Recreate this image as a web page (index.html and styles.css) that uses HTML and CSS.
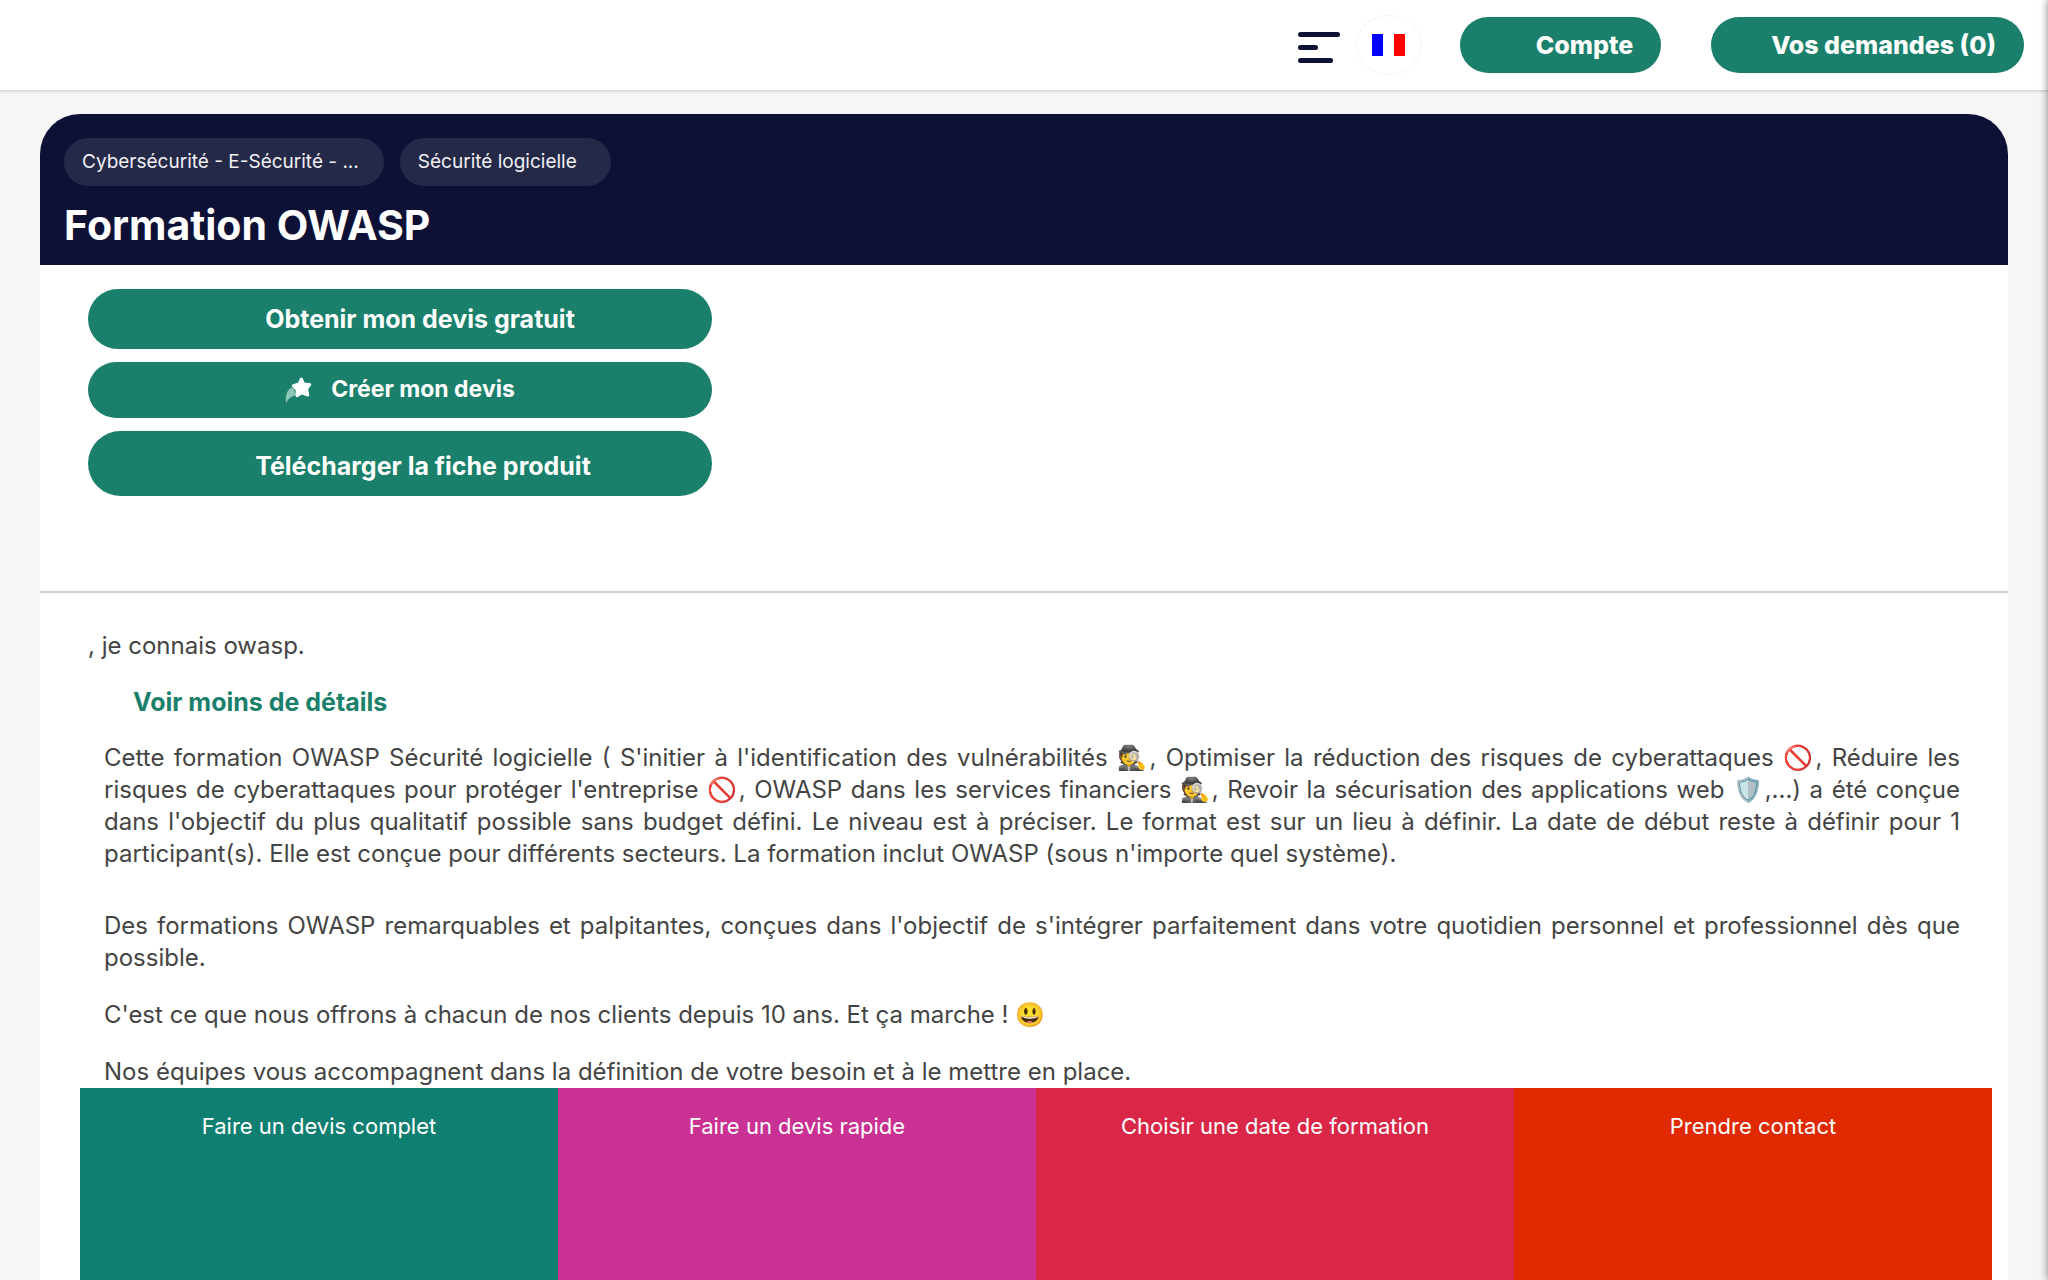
FILE: index.html
```
<!DOCTYPE html>
<html lang="fr">

<head>
    <meta charset="UTF-8">
    <meta name="viewport" content="width=device-width, initial-scale=1.0">
    <title>Formation OWASP</title>
    <link rel="stylesheet" href="styles.css">
</head>

<body>
    <header class="topbar">
        <div class="tools">
            <button class="menu-btn" aria-label="Menu">
                <span class="bar"></span>
                <span class="bar bar-short"></span>
                <span class="bar bar-medium"></span>
            </button>
            <button class="lang-btn" aria-label="Français">
                <svg width="33" height="22" viewBox="0 0 33 22">
                    <rect width="11" height="22" fill="#0000ff" />
                    <rect x="11" width="11" height="22" fill="#ffffff" />
                    <rect x="22" width="11" height="22" fill="#ff0000" />
                </svg>
            </button>
        </div>
        <button class="btn btn-top">Compte</button>
        <button class="btn btn-top">Vos demandes (0)</button>
    </header>

    <main class="card">
        <div class="card-header">
            <nav class="chips">
                <a class="chip" href="#">Cybersécurité - E-Sécurité - ...</a>
                <a class="chip" href="#">Sécurité logicielle</a>
            </nav>
            <h1>Formation OWASP</h1>
        </div>

        <div class="actions">
            <button class="btn btn-quote">Obtenir mon devis gratuit</button>
            <button class="btn btn-create">
                <svg width="28" height="28" viewBox="0 0 28 28">
                    <path d="M7 12 C2 15 0 20 1 28 C4 23 7 21 11 20 Q9.4 18 9.8 15.6 Z" fill="#8cc5b6" />
                    <path d="M16.4 4 L18.6 9 L24.8 9.4 L21.6 13.8 L22.8 20 L17 17.8 L12 20.6 L12.2 14.6 L8.4 10.6 L14 9 Z" fill="#ffffff" stroke="#ffffff" stroke-width="3" stroke-linejoin="round" />
                </svg>
                Créer mon devis
            </button>
            <button class="btn btn-download">Télécharger la fiche produit</button>
        </div>

        <div class="details">
            <p class="intro">, je connais owasp.</p>
            <button class="toggle-details">Voir moins de détails</button>
            <div class="description">
                <p class="summary">Cette formation OWASP Sécurité logicielle ( S'initier à l'identification des vulnérabilités 🕵️, Optimiser la réduction des risques de cyberattaques 🚫, Réduire les risques de cyberattaques pour protéger l'entreprise 🚫, OWASP dans les services financiers 🕵️, Revoir la sécurisation des applications web 🛡️,...) a été conçue dans l'objectif du plus qualitatif possible sans budget défini. Le niveau est à préciser. Le format est sur un lieu à définir. La date de début reste à définir pour 1 participant(s). Elle est conçue pour différents secteurs. La formation inclut OWASP (sous n'importe quel système).</p>
                <p>Des formations OWASP remarquables et palpitantes, conçues dans l'objectif de s'intégrer parfaitement dans votre quotidien personnel et professionnel dès que possible.</p>
                <p>C'est ce que nous offrons à chacun de nos clients depuis 10 ans. Et ça marche ! 😃</p>
                <p>Nos équipes vous accompagnent dans la définition de votre besoin et à le mettre en place.</p>
            </div>
        </div>

        <nav class="tiles">
            <a class="tile tile-full" href="#">Faire un devis complet</a>
            <a class="tile tile-quick" href="#">Faire un devis rapide</a>
            <a class="tile tile-date" href="#">Choisir une date de formation</a>
            <a class="tile tile-contact" href="#">Prendre contact</a>
        </nav>
    </main>

    <aside class="side-panel"></aside>
</body>

</html>
```
FILE: styles.css
```
* {
    box-sizing: border-box;
}

body {
    display: flex;
    flex-direction: column;
    min-height: 100vh;
    margin: 0;
    background-color: #f6f6f6;
    color: #444444;
    font-family: Inter, "Noto Color Emoji", sans-serif;
    font-size: 24px;
    line-height: 32px;
}

h1,
p {
    margin: 0;
}

button {
    border: none;
    font: inherit;
    cursor: pointer;
}

a {
    color: inherit;
    text-decoration: none;
}

/* Top bar */
.topbar {
    display: flex;
    align-items: center;
    justify-content: flex-end;
    gap: 50px;
    height: 90px;
    padding: 0 24px;
    background-color: #ffffff;
    box-shadow: 0 1px 3px rgba(0, 0, 0, 0.2);
}

.tools {
    display: flex;
    align-items: center;
    gap: 16px;
    margin-right: -12px;
}

.menu-btn {
    display: flex;
    flex-direction: column;
    gap: 8px;
    padding: 4px 0 0;
    background: none;
}

.bar {
    width: 42px;
    height: 5px;
    border-radius: 3px;
    background-color: #0d1136;
}

.bar-short {
    width: 20px;
}

.bar-medium {
    width: 35px;
}

.lang-btn {
    display: flex;
    align-items: center;
    justify-content: center;
    width: 66px;
    height: 60px;
    padding: 0;
    border: 1px solid #f6f6f6;
    border-radius: 50%;
    background-color: #ffffff;
}

.btn {
    border-radius: 40px;
    background-color: #1a7f6b;
    color: #ffffff;
    font-size: 25px;
    font-weight: 700;
}

.btn-top {
    height: 56px;
    padding: 0 28px 0 76px;
    font-weight: 800;
}

.btn-top + .btn-top {
    padding-left: 60px;
}

/* Card */
.card {
    display: flex;
    flex: 1;
    flex-direction: column;
    margin: 24px 40px 0;
    background-color: #ffffff;
    border-radius: 40px 40px 0 0;
}

.card-header {
    padding: 24px 24px 16px;
    border-radius: 40px 40px 0 0;
    background-color: #0d1136;
    color: #ffffff;
}

.chips {
    display: flex;
    gap: 16px;
    margin-bottom: 15px;
}

.chip {
    padding: 8px 25px 8px 18px;
    border-radius: 24px;
    background-color: #252948;
    color: #f0f0f4;
    font-size: 19px;
}

.chip:last-child {
    padding-right: 34px;
}

h1 {
    font-size: 41px;
    font-weight: 700;
    line-height: 48px;
}

.actions {
    display: flex;
    flex-direction: column;
    gap: 13px;
    width: 672px;
    padding: 24px 0 95px 48px;
}

.btn-quote {
    height: 60px;
    padding-left: 46px;
}

.btn-create {
    display: flex;
    align-items: center;
    justify-content: center;
    gap: 18px;
    height: 56px;
    padding-bottom: 4px;
    font-size: 23px;
}

.btn-download {
    height: 65px;
    padding: 4px 0 0 46px;
}

/* Details */
.details {
    padding: 37px 48px 0;
    border-top: 2px solid #d0d0d0;
}

.toggle-details {
    display: block;
    margin: 24px 0;
    padding: 0 0 0 45px;
    background: none;
    color: #1a7f6b;
    font-size: 25px;
    font-weight: 700;
}

.description {
    display: flex;
    flex-direction: column;
    gap: 25px;
    padding-left: 16px;
    text-align: justify;
}

.summary {
    padding-bottom: 15px;
}

/* Bottom tiles */
.tiles {
    display: flex;
    flex: 1;
    margin: 0 16px 0 40px;
    color: #ffffff;
    font-size: 22px;
}

.tile {
    flex: 1;
    padding-top: 22px;
    text-align: center;
}

.tile-full {
    background-color: #0f7f72;
}

.tile-quick {
    background-color: #c93192;
}

.tile-date {
    background-color: #da2748;
}

.tile-contact {
    background-color: #e12900;
}

/* Closed panel, only its shadow shows at the window edge */
.side-panel {
    position: fixed;
    top: 0;
    right: -40px;
    bottom: 0;
    width: 40px;
    box-shadow: 0 0 8px rgba(0, 0, 0, 0.5);
}
```
